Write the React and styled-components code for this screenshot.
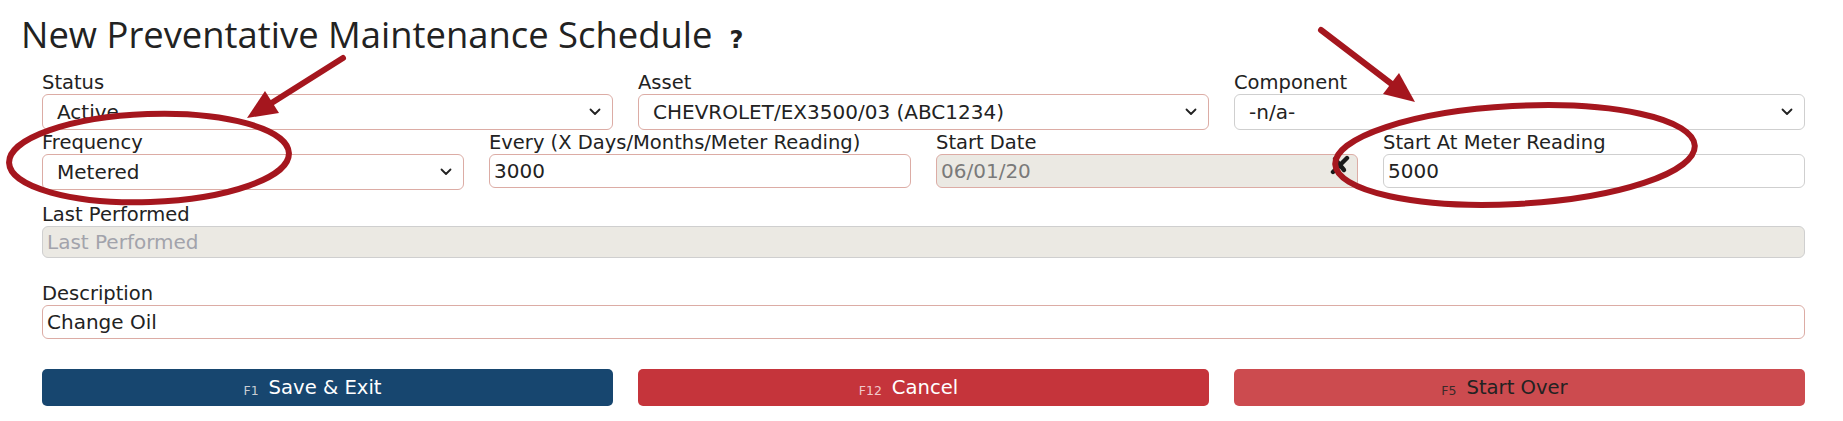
import React from 'react';
import styled, { createGlobalStyle } from 'styled-components';

const GlobalStyle = createGlobalStyle`
  html, body {
    margin: 0;
    padding: 0;
    background: #ffffff;
  }
`;

const Page = styled.div`
  position: relative;
  width: 1843px;
  height: 421px;
  box-sizing: border-box;
  padding: 0 38px 0 42px;
  font-family: "DejaVu Sans", Verdana, sans-serif;
  color: #222;
  overflow: hidden;
`;

const Title = styled.h1`
  margin: 0 0 0 -21px;
  padding-top: 10px;
  height: 62px;
  font-family: "Open Sans", "Noto Sans", sans-serif;
  font-weight: 400;
  font-size: 36.4px;
  line-height: 49px;
  color: #222;

  b {
    font-family: "DejaVu Sans", sans-serif;
    font-weight: 700;
    font-size: 24px;
    margin-left: 17px;
  }
`;

const Row = styled.div`
  display: grid;
  grid-template-columns: repeat(${(p) => p.cols || 1}, 1fr);
  column-gap: 25px;
  margin-bottom: ${(p) => p.gap || 0}px;
`;

const Group = styled.div`
  display: flex;
  flex-direction: column;
  position: relative;
`;

const Label = styled.label`
  font-size: 19.5px;
  line-height: 22px;
  color: #222;
  white-space: nowrap;
`;

const SelectBox = styled.div`
  box-sizing: border-box;
  height: 36px;
  display: flex;
  align-items: center;
  justify-content: space-between;
  padding: 0 11px 0 14px;
  border: 1px solid ${(p) => (p.tone === 'gray' ? '#cfcfcf' : '#dcaca5')};
  border-radius: 6px;
  background: #fff;
  font-size: 20px;
  color: #222;
  white-space: nowrap;
`;

const Field = styled.input`
  box-sizing: border-box;
  width: 100%;
  height: ${(p) => p.h || 34}px;
  padding: 0 4px;
  border: 1px solid ${(p) => (p.tone === 'gray' ? '#cfcfcf' : '#dcaca5')};
  border-radius: 6px;
  background: ${(p) => (p.disabled ? '#ebe9e3' : '#fff')};
  font-family: "DejaVu Sans", Verdana, sans-serif;
  font-size: 20px;
  color: ${(p) => (p.disabled ? '#7a7a7a' : '#222')};
  outline: none;

  &::placeholder {
    color: #a2a3ab;
    opacity: 1;
  }
`;

const ClearIcon = styled.svg`
  position: absolute;
  right: 8px;
  bottom: 15px;
`;

const ButtonRow = styled.div`
  display: grid;
  grid-template-columns: repeat(3, 1fr);
  column-gap: 25px;
  margin-top: 1px;
`;

const Button = styled.div`
  height: 37px;
  border-radius: 5px;
  background: ${(p) => p.bg};
  color: ${(p) => p.fg};
  display: flex;
  align-items: center;
  justify-content: center;
  font-size: 19.6px;
  padding-right: 30px;

  small {
    font-size: 12.5px;
    color: ${(p) => p.$key};
    margin-right: 10px;
    margin-top: 5px;
  }
`;

const Overlay = styled.svg`
  position: absolute;
  left: 0;
  top: 0;
  pointer-events: none;
`;

const Chevron = () => (
  <svg width="12" height="8" viewBox="0 0 12 8">
    <path d="M1.5 1.5 L6 6 L10.5 1.5" fill="none" stroke="#222" strokeWidth="1.8" strokeLinecap="round" strokeLinejoin="round" />
  </svg>
);

const Select = ({ label, value, tone }) => (
  <Group>
    <Label>{label}</Label>
    <SelectBox tone={tone}>
      <span>{value}</span>
      <Chevron />
    </SelectBox>
  </Group>
);

const Input = ({ label, children, ...rest }) => (
  <Group>
    <Label>{label}</Label>
    <Field readOnly {...rest} />
    {children}
  </Group>
);

const arrowColor = '#a5161e';

const Annotations = () => (
  <Overlay width="1843" height="421" viewBox="0 0 1843 421">
    <g fill="none" stroke={arrowColor} strokeWidth="6">
      <ellipse cx="149" cy="158" rx="140" ry="44" transform="rotate(-2 149 158)" />
      <ellipse cx="1515" cy="155" rx="180" ry="49" transform="rotate(-3 1515 155)" />
      <line x1="343" y1="58" x2="270" y2="104" strokeLinecap="round" />
      <line x1="1321" y1="30" x2="1393" y2="85" strokeLinecap="round" />
    </g>
    <g fill={arrowColor}>
      <polygon points="247,118 279,113 265,91" />
      <polygon points="1415,102 1383,94 1399,73" />
    </g>
  </Overlay>
);

export default function App() {
  return (
    <>
      <GlobalStyle />
      <Page>
        <Title>
          New Preventative Maintenance Schedule<b>?</b>
        </Title>
        <Row cols={3} gap={2}>
          <Select label="Status" value="Active" />
          <Select label="Asset" value="CHEVROLET/EX3500/03 (ABC1234)" />
          <Select label="Component" value="-n/a-" tone="gray" />
        </Row>
        <Row cols={4} gap={14}>
          <Select label="Frequency" value="Metered" />
          <Input label="Every (X Days/Months/Meter Reading)" value="3000" />
          <Input label="Start Date" value="06/01/20" disabled>
            <ClearIcon width="20" height="20" viewBox="0 0 20 20">
              <g stroke="#1a1a1a" strokeWidth="4.4" strokeLinecap="round">
                <line x1="3" y1="17" x2="17" y2="3" />
                <line x1="5" y1="4" x2="14" y2="15" />
              </g>
            </ClearIcon>
          </Input>
          <Input label="Start At Meter Reading" value="5000" tone="gray" />
        </Row>
        <Row gap={25}>
          <Input label="Last Performed" placeholder="Last Performed" value="" disabled tone="gray" h={32} />
        </Row>
        <Row gap={30}>
          <Input label="Description" value="Change Oil" h={34} />
        </Row>
        <ButtonRow>
          <Button bg="#17466f" fg="#ffffff" $key="#c9ccd3">
            <small>F1</small>Save &amp; Exit
          </Button>
          <Button bg="#c5343b" fg="#ffffff" $key="#f0c8ca">
            <small>F12</small>Cancel
          </Button>
          <Button bg="#cc4b4f" fg="#222222" $key="#3a2a2a">
            <small>F5</small>Start Over
          </Button>
        </ButtonRow>
        <Annotations />
      </Page>
    </>
  );
}
